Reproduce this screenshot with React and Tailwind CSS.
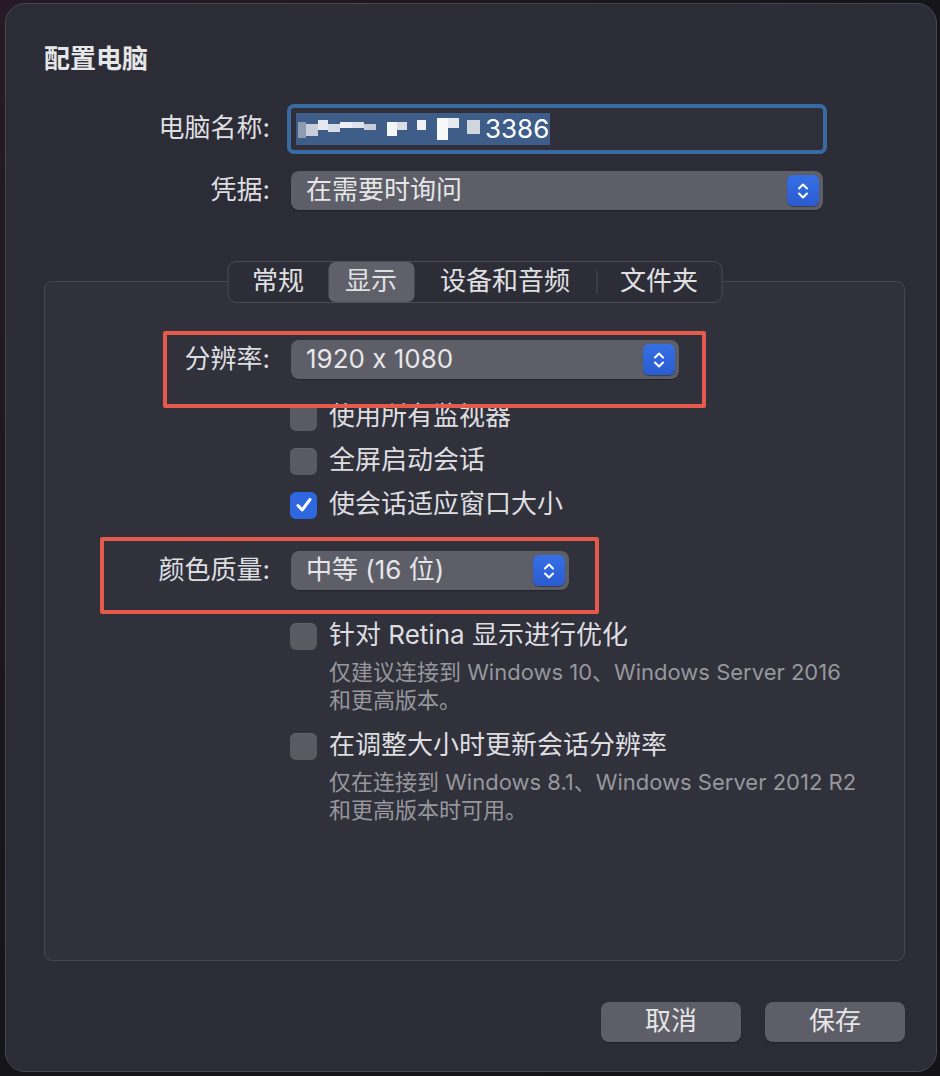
import { useState } from 'react'

const Stepper = () => (
  <div className="ml-auto mr-[4px] flex h-[31px] w-[32px] items-center justify-center rounded-[6px] bg-gradient-to-b from-[#3670e6] to-[#2a5bcf] shadow-[0_1px_1px_rgba(0,0,0,0.35)]">
    <svg width="20" height="24" viewBox="0 0 20 24" fill="none" stroke="white" strokeWidth="2" strokeLinecap="round" strokeLinejoin="round">
      <path d="M6 9.5 L10 5.5 L14 9.5" />
      <path d="M6 14.5 L10 18.5 L14 14.5" />
    </svg>
  </div>
)

const Popup = ({ text, className }) => (
  <div className={'flex h-[39px] items-center rounded-[8px] bg-[#5d5e67] pl-[15px] text-[26px] leading-none text-[#e6e6e8] shadow-[0_1px_1px_rgba(0,0,0,0.3)] ' + className}>
    <span className="pb-[2px] [font-feature-settings:'calt'_0]">{text}</span>
    <Stepper />
  </div>
)

const Checkbox = ({ checked, label }) => (
  <div className="flex h-[44px] items-center">
    {checked ? (
      <div className="flex h-[27px] w-[27px] items-center justify-center rounded-[6px] bg-[#2f67e0]">
        <svg width="20" height="20" viewBox="0 0 20 20" fill="none" stroke="white" strokeWidth="3" strokeLinecap="round" strokeLinejoin="round">
          <path d="M4 10.5 L8.2 15 L16 4.5" />
        </svg>
      </div>
    ) : (
      <div className="h-[27px] w-[27px] rounded-[6px] bg-[#595a62] shadow-[inset_0_1px_0_rgba(255,255,255,0.06)]" />
    )}
    <span className="ml-[12px] pb-[2px] text-[26px] leading-none text-[#dedee0]">{label}</span>
  </div>
)

const Desc = ({ lines }) => (
  <div className="pl-[39px] text-[22px] leading-[28px] text-[#97979d]">
    {lines.map((l) => <div key={l}>{l}</div>)}
  </div>
)

// pixelated part of the computer name
const blur = [
  { w: 8, h: 16, c: '#8f9bb0', t: 6 },
  { w: 12, h: 12, c: '#c9cfd9', t: 8 },
  { w: 10, h: 10, c: '#e5e8ed', t: 4 },
  { w: 12, h: 8, c: '#d7dbe3', t: 8 },
  { w: 12, h: 6, c: '#eef0f3', t: 6 },
  { w: 12, h: 6, c: '#dfe2e8', t: 6 },
  { w: 12, h: 6, c: '#c8cdd7', t: 8 },
  { w: 11, h: 0, c: 'transparent', t: 0 },
  { w: 10, h: 14, c: '#f4f5f7', t: 6 },
  { w: 10, h: 8, c: '#d9dde4', t: 6 },
  { w: 10, h: 0, c: 'transparent', t: 0 },
  { w: 9, h: 10, c: '#f0f2f5', t: 4 },
  { w: 11, h: 0, c: 'transparent', t: 0 },
  { w: 11, h: 22, c: '#f7f8fa', t: 2 },
  { w: 11, h: 10, c: '#e6e9ee', t: 2 },
  { w: 8, h: 0, c: 'transparent', t: 0 },
  { w: 13, h: 14, c: '#d0d5de', t: 4 },
]

export default function App() {
  const [tab, setTab] = useState('显示')
  const tabs = [
    { id: '常规', w: 'w-[100px]' },
    { id: '显示', w: 'w-[86px]' },
    { id: '设备和音频', w: 'w-[182px]' },
    { id: '文件夹', w: 'w-[124px]' },
  ]

  return (
    <div className="h-[1076px] w-[940px] overflow-hidden bg-[#17161b] bg-gradient-to-br from-[#261a26] via-[#151419] to-[#141418] pl-[5px] pt-[3px] font-['Inter','Noto_Sans_CJK_SC',sans-serif]">
      <div className="flex h-[1069px] w-[932px] flex-col rounded-[20px] border border-[#46464e] bg-[#2b2c36] pl-[38px] pr-[31px]">
        <div className="mt-[39px] h-[32px] text-[26px] font-bold leading-[32px] text-[#e6e6e8]">配置电脑</div>

        <div className="mt-[33px] flex h-[42px] items-center">
          <div className="w-[226px] pb-[2px] text-right text-[26px] leading-none text-[#dedee0]">电脑名称:</div>
          <div className="ml-[21px] flex h-[42px] w-[532px] items-center rounded-[3px] bg-[#2e2f39] pl-[5px] ring-4 ring-[#3a6aa2]">
            <div className="flex h-[32px] items-center bg-[#3e5e89] pl-[2px] pr-[1px]">
              <div className="flex h-[26px] items-start">
                {blur.map((b, i) => (
                  <div key={i} style={{ width: b.w, height: b.h, marginTop: b.t, background: b.c }} />
                ))}
              </div>
              <span className="ml-[5px] pb-[1px] text-[26px] leading-none text-white">3386</span>
            </div>
          </div>
        </div>

        <div className="mt-[21px] flex items-center">
          <div className="w-[226px] pb-[2px] text-right text-[26px] leading-none text-[#dedee0]">凭据:</div>
          <Popup text="在需要时询问" className="ml-[21px] w-[532px]" />
        </div>

        <div className="relative mt-[51px] pt-[20px]">
          <div className="absolute left-1/2 top-0 z-10 flex h-[42px] -translate-x-1/2 items-center rounded-[9px] border border-[#4b4c56] bg-[#2c2d37] text-[26px] leading-none text-[#e0e0e2]">
            {tabs.map((t, i) => (
              <div key={t.id} className="flex items-center">
                {i === 3 && <div className="h-[24px] w-px bg-[#4c4d57]" />}
                <button
                  onClick={() => setTab(t.id)}
                  className={'flex h-[40px] items-center justify-center rounded-[7px] pb-[2px] ' + t.w + (tab === t.id ? ' bg-[#5f606a]' : '')}
                >
                  {t.id}
                </button>
              </div>
            ))}
          </div>

          <div className="relative h-[680px] rounded-[8px] border border-[#45464f] bg-[#30313b]">
            <div className="mt-[58px] flex items-center">
              <div className="w-[225px] pb-[2px] text-right text-[26px] leading-none text-[#dedee0]">分辨率:</div>
              <Popup text="1920 x 1080" className="ml-[21px] w-[388px]" />
            </div>

            <div className="mt-[16px] pl-[245px]">
              <Checkbox label="使用所有监视器" />
              <Checkbox label="全屏启动会话" />
              <Checkbox checked label="使会话适应窗口大小" />
            </div>

            <div className="mt-[24px] flex items-center">
              <div className="w-[225px] pb-[2px] text-right text-[26px] leading-none text-[#dedee0]">颜色质量:</div>
              <Popup text="中等 (16 位)" className="ml-[21px] w-[278px]" />
            </div>

            <div className="mt-[24px] pl-[245px]">
              <Checkbox label="针对 Retina 显示进行优化" />
              <Desc lines={['仅建议连接到 Windows 10、Windows Server 2016', '和更高版本。']} />
              <div className="mt-[10px]">
                <Checkbox label="在调整大小时更新会话分辨率" />
              </div>
              <Desc lines={['仅在连接到 Windows 8.1、Windows Server 2012 R2', '和更高版本时可用。']} />
            </div>

            {/* annotation boxes */}
            <div className="absolute left-[118px] top-[49px] h-[77px] w-[543px] rounded-[2px] border-4 border-[#e65a4c]" />
            <div className="absolute left-[55px] top-[255px] h-[77px] w-[499px] rounded-[2px] border-4 border-[#e65a4c]" />
          </div>
        </div>

        <div className="mt-[41px] flex justify-end gap-[24px]">
          <button className="flex h-[40px] w-[140px] items-center justify-center rounded-[8px] bg-[#5d5e67] pb-[2px] text-[26px] leading-none text-[#e6e6e8] shadow-[0_1px_1px_rgba(0,0,0,0.3)]">取消</button>
          <button className="flex h-[40px] w-[140px] items-center justify-center rounded-[8px] bg-[#5d5e67] pb-[2px] text-[26px] leading-none text-[#e6e6e8] shadow-[0_1px_1px_rgba(0,0,0,0.3)]">保存</button>
        </div>
      </div>
    </div>
  )
}
